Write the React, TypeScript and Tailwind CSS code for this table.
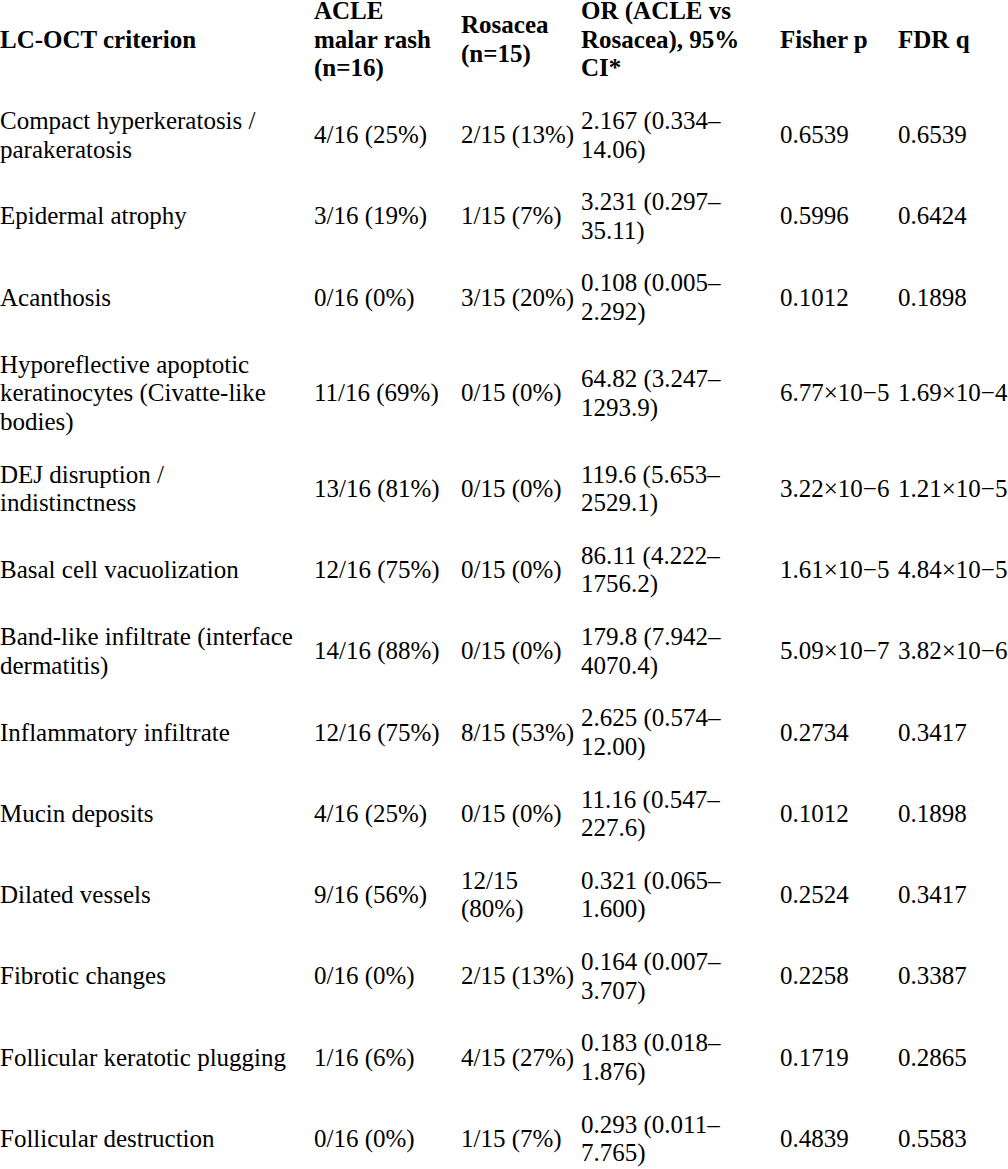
import React from "react";

type Row = [string, string, string, string, string, string];

const rows: Row[] = [
  ["Compact hyperkeratosis / parakeratosis", "4/16 (25%)", "2/15 (13%)", "2.167 (0.334–14.06)", "0.6539", "0.6539"],
  ["Epidermal atrophy", "3/16 (19%)", "1/15 (7%)", "3.231 (0.297–35.11)", "0.5996", "0.6424"],
  ["Acanthosis", "0/16 (0%)", "3/15 (20%)", "0.108 (0.005–2.292)", "0.1012", "0.1898"],
  ["Hyporeflective apoptotic keratinocytes (Civatte-like bodies)", "11/16 (69%)", "0/15 (0%)", "64.82 (3.247–1293.9)", "6.77×10−5", "1.69×10−4"],
  ["DEJ disruption / indistinctness", "13/16 (81%)", "0/15 (0%)", "119.6 (5.653–2529.1)", "3.22×10−6", "1.21×10−5"],
  ["Basal cell vacuolization", "12/16 (75%)", "0/15 (0%)", "86.11 (4.222–1756.2)", "1.61×10−5", "4.84×10−5"],
  ["Band-like infiltrate (interface dermatitis)", "14/16 (88%)", "0/15 (0%)", "179.8 (7.942–4070.4)", "5.09×10−7", "3.82×10−6"],
  ["Inflammatory infiltrate", "12/16 (75%)", "8/15 (53%)", "2.625 (0.574–12.00)", "0.2734", "0.3417"],
  ["Mucin deposits", "4/16 (25%)", "0/15 (0%)", "11.16 (0.547–227.6)", "0.1012", "0.1898"],
  ["Dilated vessels", "9/16 (56%)", "12/15 (80%)", "0.321 (0.065–1.600)", "0.2524", "0.3417"],
  ["Fibrotic changes", "0/16 (0%)", "2/15 (13%)", "0.164 (0.007–3.707)", "0.2258", "0.3387"],
  ["Follicular keratotic plugging", "1/16 (6%)", "4/15 (27%)", "0.183 (0.018–1.876)", "0.1719", "0.2865"],
  ["Follicular destruction", "0/16 (0%)", "1/15 (7%)", "0.293 (0.011–7.765)", "0.4839", "0.5583"],
];

const pad = ["pr-[12px]", "pr-[12px]", "pr-[4px]", "pr-[9px]", "pr-[6px]", "pr-0"];

export default function App() {
  return (
    <div className="w-[1008px] overflow-hidden bg-white text-black">
      <table className="-mt-[15px] w-[1008px] table-fixed border-collapse font-['Liberation_Serif','Times_New_Roman',serif] text-[25px] leading-[28.625px]">
        <colgroup>
          <col className="w-[314px]" />
          <col className="w-[147px]" />
          <col className="w-[120px]" />
          <col className="w-[199px]" />
          <col className="w-[118px]" />
          <col className="w-[110px]" />
        </colgroup>
        <thead>
          <tr>
            <th className="py-3 pl-0 pr-[12px] text-left align-middle font-bold">LC-OCT criterion</th>
            <th className="py-3 pl-0 pr-[12px] text-left align-middle font-bold">ACLE malar rash (n=16)</th>
            <th className="py-3 pl-0 pr-[4px] text-left align-middle font-bold">Rosacea (n=15)</th>
            <th className="py-3 pl-0 pr-[9px] text-left align-middle font-bold">OR (ACLE vs Rosacea), 95% CI*</th>
            <th className="py-3 pl-0 pr-[6px] text-left align-middle font-bold whitespace-nowrap">Fisher p</th>
            <th className="py-3 pl-0 pr-0 text-left align-middle font-bold whitespace-nowrap">FDR q</th>
          </tr>
        </thead>
        <tbody>
          {rows.map((r, i) => (
            <tr key={i}>
              {r.map((c, j) => (
                <td
                  key={j}
                  className={`py-3 pl-0 text-left align-middle font-normal ${pad[j]} ${j >= 4 ? "whitespace-nowrap" : ""}`}
                >
                  {c}
                </td>
              ))}
            </tr>
          ))}
        </tbody>
      </table>
    </div>
  );
}
